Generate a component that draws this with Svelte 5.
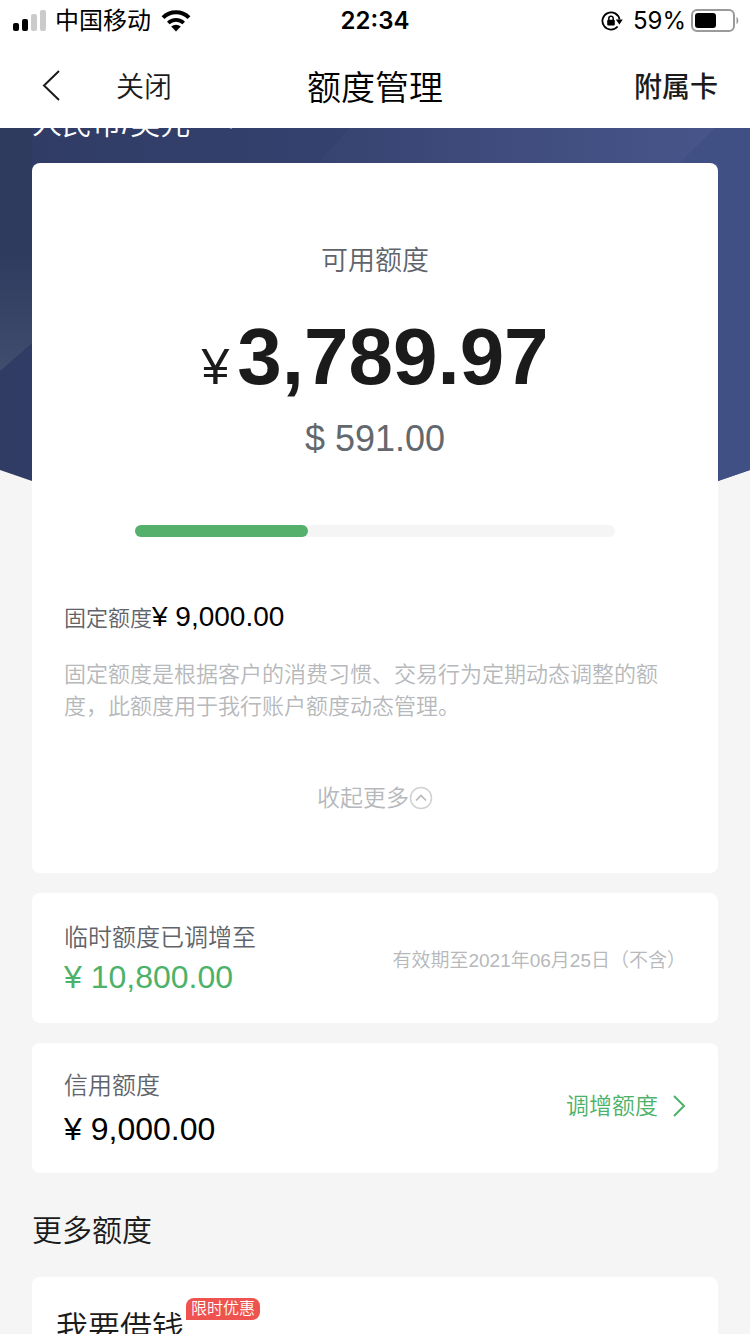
<!--
额度管理页面:展示可用额度、临时额度、信用额度以及更多额度入口。
-->
<script lang="ts">
	const available = 3789.97;
	const fixed = 9000;
	const temporary = 10800;
	const credit = 9000;
	const usedPercent = 36;

	let expanded = $state(true);

	function money(value: number) {
		return value.toLocaleString('en-US', { minimumFractionDigits: 2 });
	}
</script>

<div class="app">
	<header>
		<div class="status">
			<div class="status-left">
				<svg width="34" height="22" viewBox="0 0 34 22" aria-hidden="true">
					<rect x="0" y="13" width="6" height="8" rx="2" />
					<rect x="9" y="9" width="6" height="12" rx="2" />
					<rect x="18" y="4" width="6" height="17" rx="2" fill="#cbcbcb" />
					<rect x="27" y="0" width="6" height="21" rx="2" fill="#cbcbcb" />
				</svg>
				<span>中国移动</span>
				<svg class="wifi" width="30" height="22" viewBox="0 0 30 22" aria-hidden="true">
					<path d="M2 7.6a18.4 18.4 0 0 1 26 0" fill="none" stroke="#000" stroke-width="4" />
					<path d="M7.3 13a11 11 0 0 1 15.4 0" fill="none" stroke="#000" stroke-width="3.7" />
					<path d="M15 21.5l-4.8-4.9a7 7 0 0 1 9.6 0z" />
				</svg>
			</div>
			<time>22:34</time>
			<div class="status-right">
				<svg width="22" height="22" viewBox="0 0 22 22" aria-hidden="true">
					<path d="M16.6 16.5A8.6 8.6 0 1 1 18.5 9.5" fill="none" stroke="#000" stroke-width="1.8" />
					<path d="M14.8 9.6h7l-3.4 5z" />
					<rect x="6.2" y="9.8" width="7.6" height="5.6" rx="1" />
					<path d="M7.8 10.4V8.4a2.2 2.2 0 0 1 4.4 0v2" fill="none" stroke="#000" stroke-width="1.5" />
				</svg>
				<span>59%</span>
				<svg width="48" height="24" viewBox="0 0 48 24" aria-hidden="true">
					<rect x="1" y="1" width="42" height="21" rx="5" fill="none" stroke="#9a9a9a" stroke-width="2" />
					<rect x="4" y="4" width="21" height="15" rx="3" />
					<path d="M45.5 8c2.4 1 2.4 6 0 7z" fill="#9a9a9a" />
				</svg>
			</div>
		</div>
		<nav>
			<div class="nav-left">
				<button type="button" aria-label="返回">
					<svg width="20" height="32" viewBox="0 0 20 32" aria-hidden="true">
						<path d="M19 2L4 16.5l15 14.5" fill="none" stroke="#1b1b1b" stroke-width="2" />
					</svg>
				</button>
				<button type="button">关闭</button>
			</div>
			<h1>额度管理</h1>
			<button type="button" class="nav-right">附属卡</button>
		</nav>
	</header>

	<main>
		<svg class="backdrop" viewBox="0 0 750 353" preserveAspectRatio="none" aria-hidden="true">
			<defs>
				<linearGradient id="base" x1="0" y1="0" x2="1" y2="0">
					<stop offset="0" stop-color="#303c64" />
					<stop offset="0.45" stop-color="#34416e" />
					<stop offset="1" stop-color="#43528a" />
				</linearGradient>
				<linearGradient id="left" x1="0" y1="0" x2="0" y2="1">
					<stop offset="0" stop-color="#2e3b5e" />
					<stop offset="0.5" stop-color="#2e3b5e" />
					<stop offset="1" stop-color="#414c6e" />
				</linearGradient>
				<linearGradient id="band" x1="0" y1="0" x2="1" y2="0">
					<stop offset="0" stop-color="#35426f" />
					<stop offset="1" stop-color="#48558a" />
				</linearGradient>
			</defs>
			<path d="M0 0H750V342L718 353H32L0 342z" fill="url(#base)" />
			<path d="M0 0H32V215L0 243z" fill="url(#left)" />
			<path d="M350 0H715L645 70H285z" fill="url(#band)" />
			<path d="M715 0H750V342L718 353V35H680z" fill="#404f84" />
		</svg>

		<div class="content">
			<button type="button" class="currency">
				人民币/美元
				<svg width="18" height="12" viewBox="0 0 18 12" aria-hidden="true">
					<path d="M2 2h14l-7 9z" fill="#fff" />
				</svg>
			</button>

			<section class="card summary">
				<h2>可用额度</h2>
				<p class="amount"><span>¥</span><strong>{money(available)}</strong></p>
				<p class="dollar">$ 591.00</p>
				<div class="track" role="progressbar" aria-label="可用额度" aria-valuenow={usedPercent}>
					<div class="bar" style="width: {usedPercent}%"></div>
				</div>
				{#if expanded}
					<div class="detail">
						<p class="fixed"><span>固定额度</span><b>¥ {money(fixed)}</b></p>
						<p class="note">
							固定额度是根据客户的消费习惯、交易行为定期动态调整的额度，此额度用于我行账户额度动态管理。
						</p>
					</div>
				{/if}
				<button type="button" class="toggle" onclick={() => (expanded = !expanded)}>
					{expanded ? '收起更多' : '展开更多'}
					<svg class:down={!expanded} width="24" height="24" viewBox="0 0 24 24" aria-hidden="true">
						<circle cx="12" cy="12" r="10.5" fill="none" stroke="#d0d1d3" stroke-width="1.5" />
						<path d="M7 14.5l5-5 5 5" fill="none" stroke="#b6b8bb" stroke-width="1.6" />
					</svg>
				</button>
			</section>

			<section class="card row">
				<div>
					<h3>临时额度已调增至</h3>
					<p class="value green">¥ {money(temporary)}</p>
				</div>
				<span class="expiry">有效期至2021年06月25日（不含）</span>
			</section>

			<section class="card row">
				<div>
					<h3>信用额度</h3>
					<p class="value spaced">¥ {money(credit)}</p>
				</div>
				<button type="button" class="raise">
					调增额度
					<svg width="14" height="22" viewBox="0 0 14 22" aria-hidden="true">
						<path d="M2 1l10 10L2 21" fill="none" stroke="#4db269" stroke-width="2" />
					</svg>
				</button>
			</section>

			<h2 class="more">更多额度</h2>
			<section class="card loan">
				<span>我要借钱</span>
				<em>限时优惠</em>
			</section>
		</div>
	</main>
</div>

<style>
	.app {
		display: flex;
		flex-direction: column;
		height: 100vh;
		background: #f5f5f5;
		color: #1b1b1b;
		font-family: 'Liberation Sans', 'Noto Sans CJK SC', sans-serif;
		font-weight: 350;
	}

	h1,
	h2,
	h3,
	p {
		margin: 0;
		font-weight: inherit;
	}

	svg {
		display: block;
		flex: none;
	}

	button {
		padding: 0;
		border: none;
		background: none;
		color: inherit;
		font: inherit;
		cursor: pointer;
	}

	header {
		flex: none;
		background: #fff;
	}

	.status {
		display: grid;
		grid-template-columns: 1fr auto 1fr;
		align-items: center;
		height: 42px;
		padding: 0 11px;
		color: #000;
		font-family: Inter, 'Noto Sans CJK SC', sans-serif;
		font-size: 24px;
		font-weight: 400;
		line-height: 42px;
	}

	.status-left,
	.status-right {
		display: flex;
		align-items: center;
		gap: 8px;
	}

	.status-left {
		padding-left: 2px;
	}

	.status-right {
		justify-content: flex-end;
		gap: 5px;
	}

	.status-right span {
		margin-left: 5px;
	}

	.wifi {
		margin-left: 2px;
	}

	time {
		font-weight: 600;
	}

	nav {
		display: grid;
		grid-template-columns: 1fr auto 1fr;
		align-items: center;
		height: 86px;
		padding: 0 32px;
		font-size: 28px;
	}

	.nav-left {
		display: flex;
		align-items: center;
		gap: 56px;
		padding-left: 8px;
	}

	nav h1 {
		color: #000;
		font-size: 34px;
	}

	.nav-right {
		justify-self: end;
		font-weight: 500;
	}

	main {
		display: grid;
		flex: 1;
		min-height: 0;
		align-items: start;
		overflow: hidden auto;
		scrollbar-width: none;
	}

	.backdrop,
	.content {
		grid-area: 1 / 1;
		min-width: 0;
	}

	.backdrop {
		width: 100%;
		height: 353px;
	}

	.content {
		position: relative;
		padding: 0 32px;
	}

	.currency {
		display: flex;
		align-items: center;
		gap: 32px;
		height: 46px;
		margin-top: -27px;
		color: #fff;
		font-size: 30px;
		line-height: 46px;
	}

	.card {
		margin-bottom: 20px;
		border-radius: 8px;
		background: #fff;
	}

	.summary {
		display: flex;
		flex-direction: column;
		align-items: center;
		margin-top: 16px;
		padding: 78px 32px 59px;
	}

	.summary h2 {
		color: #5f646b;
		font-size: 27px;
		line-height: 40px;
	}

	.amount {
		display: flex;
		align-items: baseline;
		gap: 8px;
		margin-top: 30px;
		line-height: 92px;
	}

	.amount span {
		font-size: 50px;
	}

	.amount strong {
		font-size: 80px;
	}

	.dollar {
		margin-top: 6px;
		color: #63686e;
		font-size: 36px;
		line-height: 40px;
	}

	.track {
		width: 480px;
		max-width: 100%;
		height: 12px;
		margin-top: 66px;
		border-radius: 6px;
		background: #f5f5f5;
	}

	.bar {
		height: 100%;
		border-radius: 6px;
		background: #55b06b;
	}

	.detail {
		align-self: stretch;
		margin-top: 60px;
	}

	.fixed {
		color: #5f646b;
		font-size: 22px;
		line-height: 40px;
	}

	.fixed b {
		color: #000;
		font-size: 28px;
		font-weight: 400;
	}

	.note {
		margin-top: 20px;
		color: #b6b8bb;
		font-size: 22px;
		line-height: 32px;
	}

	.toggle {
		display: flex;
		align-items: center;
		margin-top: 59px;
		color: #b6b8bb;
		font-size: 23px;
		line-height: 32px;
	}

	.down {
		transform: rotate(180deg);
	}

	.row {
		display: flex;
		align-items: center;
		justify-content: space-between;
		min-height: 130px;
		padding: 0 32px;
		box-sizing: border-box;
	}

	.row h3 {
		color: #5f646b;
		font-size: 24px;
		line-height: 38px;
	}

	.value {
		color: #000;
		font-size: 32px;
		line-height: 40px;
	}

	.spaced {
		margin-top: 4px;
	}

	.green {
		color: #4db269;
	}

	.expiry {
		color: #b6b8bb;
		font-size: 19px;
	}

	.raise {
		display: flex;
		align-items: center;
		gap: 14px;
		padding-bottom: 4px;
		color: #4db269;
		font-size: 23px;
		line-height: 32px;
	}

	.more {
		margin: 36px 0 24px;
		font-size: 30px;
		line-height: 44px;
	}

	.loan {
		display: flex;
		align-items: flex-start;
		gap: 2px;
		padding: 21px 24px;
	}

	.loan span {
		margin-top: 6px;
		font-size: 32px;
		line-height: 48px;
	}

	.loan em {
		padding: 0 5px;
		border-radius: 8px 8px 8px 0;
		background: #ee534f;
		color: #fff;
		font-size: 16px;
		font-style: normal;
		line-height: 22px;
	}
</style>
